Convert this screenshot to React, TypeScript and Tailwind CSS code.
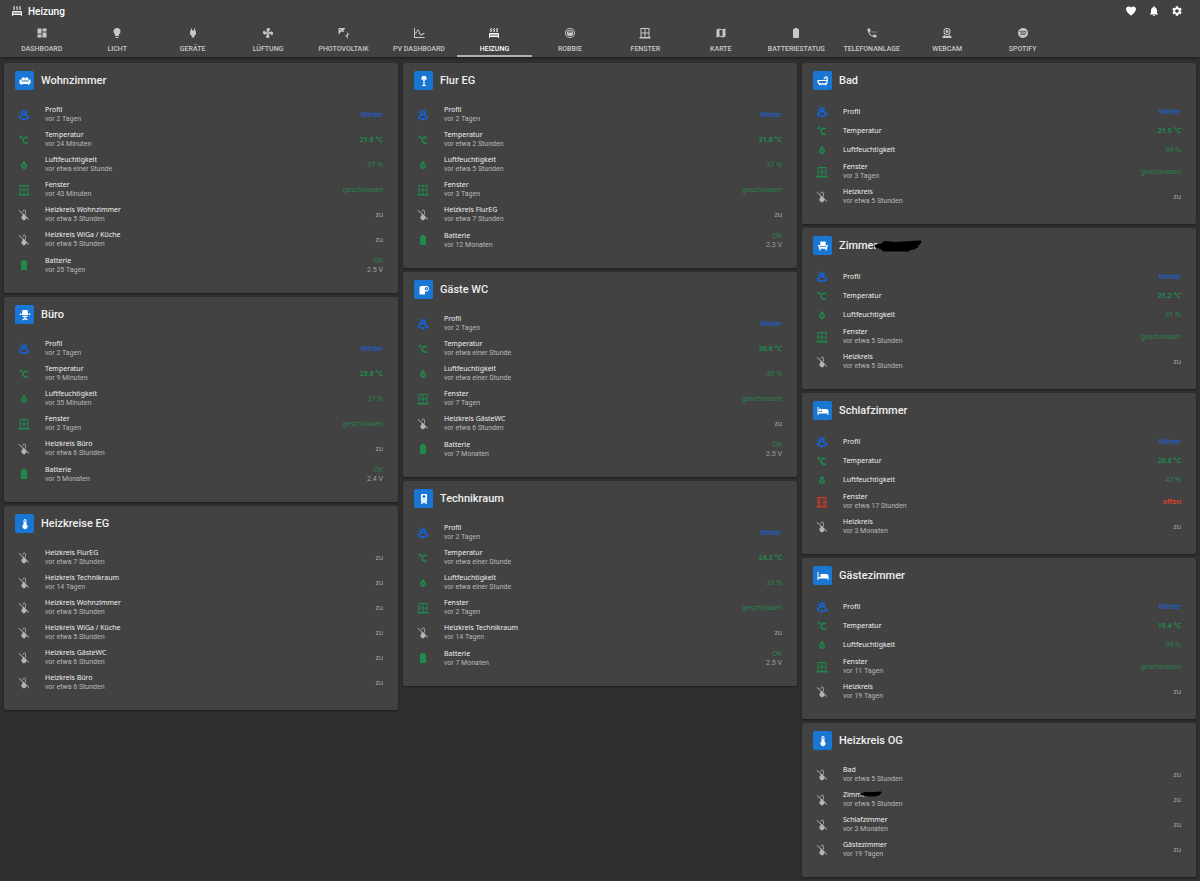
import React from "react";
import { MdDashboard, MdMap, MdFavorite, MdNotifications, MdSettings } from "react-icons/md";

type IconProps = { className?: string };

const glyph = (d: string) =>
  function Glyph({ className }: IconProps) {
    return (
      <svg viewBox="0 0 24 24" fill="currentColor" fillRule="evenodd" className={className} aria-hidden="true">
        <path d={d} />
      </svg>
    );
  };

const Radiator = glyph(
  "M7.95,3L6.53,5.19L7.95,7.4L5.95,10.5L4.22,9.6L5.64,7.39L4.22,5.19L6.22,2.09L7.95,3M13.95,2.89L12.53,5.1L13.95,7.3L11.95,10.4L10.22,9.5L11.64,7.3L10.22,5.1L12.22,2L13.95,2.89M20,2.89L18.56,5.1L20,7.3L18,10.4L16.25,9.5L17.67,7.3L16.25,5.1L18.25,2L20,2.89M2,22V14A2,2 0 0,1 4,12H20A2,2 0 0,1 22,14V22H20V20H4V22H2M6,14A1,1 0 0,0 5,15V17A1,1 0 0,0 7,17V15A1,1 0 0,0 6,14M10,14A1,1 0 0,0 9,15V17A1,1 0 0,0 11,17V15A1,1 0 0,0 10,14M14,14A1,1 0 0,0 13,15V17A1,1 0 0,0 15,17V15A1,1 0 0,0 14,14M18,14A1,1 0 0,0 17,15V17A1,1 0 0,0 19,17V15A1,1 0 0,0 18,14Z",
);
const Bulb = glyph(
  "M12,2A7,7 0 0,0 5,9C5,11.38 6.19,13.47 8,14.74V17A1,1 0 0,0 9,18H15A1,1 0 0,0 16,17V14.74C17.81,13.47 19,11.38 19,9A7,7 0 0,0 12,2M9,21A1,1 0 0,0 10,22H14A1,1 0 0,0 15,21V20H9V21Z",
);
const Plug = glyph("M16,7V3H14V7H10V3H8V7C7,7 6,8 6,9V14.5L9.5,18V21H14.5V18L18,14.5V9C18,8 17,7 16,7Z");
const Fan = glyph(
  "M12,11A1,1 0 0,0 11,12A1,1 0 0,0 13,12A1,1 0 0,0 12,11M12.5,2C17,2 17.11,5.57 14.75,6.75C13.76,7.24 13.32,8.29 13.13,9.22C13.61,9.42 14.03,9.73 14.35,10.13C18.05,8.13 22.03,8.92 22.03,12.5C22.03,17 18.46,17.1 17.28,14.73C16.78,13.74 15.72,13.3 14.79,13.11C14.59,13.59 14.28,14 13.88,14.34C15.87,18.03 15.08,22 11.5,22C7,22 6.91,18.42 9.27,17.24C10.25,16.75 10.69,15.71 10.89,14.79C10.4,14.59 9.97,14.27 9.65,13.87C5.96,15.85 2,15.07 2,11.5C2,7 5.56,6.89 6.74,9.26C7.24,10.25 8.29,10.68 9.22,10.87C9.41,10.39 9.73,9.97 10.14,9.65C8.15,5.96 8.94,2 12.5,2Z",
);
const SolarPower = glyph("M1,2H14V4L10,6.5L12.5,8.5L10.5,10.5L7,8.5L2,14.5H1V2M3,4V6H5V4H3M18,10L22.5,16H19.5V23L14,16.5H18V10Z");
const ChartCurve = glyph(
  "M2,2H4V20H23V22H2V2M4,11L6,11C8,4 11,3 13,9C14.5,14 16,16 18.5,13.5L20,12H23V14H21L19.5,15.5C16,18.5 13,16 11.3,10C10,5.5 8.8,6.5 7.5,11.5L7,13H4V11Z",
);
const Vacuum = glyph(
  "M12,2A10,10 0 1,0 12,22A10,10 0 1,0 12,2M12,4A8,8 0 1,1 12,20A8,8 0 1,1 12,4M12,6C9,6 6.7,7.5 6,10V15C7.5,17.5 9.5,18 12,18C14.5,18 16.5,17.5 18,15V10C17.3,7.5 15,6 12,6M8,10C9,8.3 15,8.3 16,10V11H8V10Z",
);
const WindowClosed = glyph(
  "M21 20V2H3V20H1V23H23V20H21M19 11H13V4H19V11M5 4H11V11H5V4M5 20V13H11V20H5M13 20V13H19V20H13Z",
);
const WindowOpen = glyph(
  "M21 20V2H3V20H1V23H23V20H21M19 4V11H17V4H19M5 4H7V11H5V4M5 20V13H7V20H5M9 20V4H15V20H9M17 20V13H19V20H17Z",
);
const Battery = glyph(
  "M16.67,4H15V2H9V4H7.33A1.33,1.33 0 0,0 6,5.33V20.67C6,21.4 6.6,22 7.33,22H16.67A1.33,1.33 0 0,0 18,20.67V5.33C18,4.6 17.4,4 16.67,4Z",
);
const Phone = glyph(
  "M20,15.5C18.8,15.5 17.5,15.3 16.4,14.9C16,14.8 15.6,14.9 15.4,15.2L13.2,17.4C10.4,15.9 8,13.6 6.6,10.8L8.8,8.6C9.1,8.3 9.2,7.9 9,7.6C8.7,6.5 8.5,5.2 8.5,4C8.5,3.5 8,3 7.5,3H4C3.5,3 3,3.5 3,4C3,13.4 10.6,21 20,21C20.5,21 21,20.5 21,20V16.5C21,16 20.5,15.5 20,15.5M11,9H13V11H11V9M15,9H17V11H15V9M19,9H21V11H19V9Z",
);
const Webcam = glyph(
  "M12,2A7,7 0 1,0 12,16A7,7 0 1,0 12,2M12,4A5,5 0 1,1 12,14A5,5 0 1,1 12,4M12,6A3,3 0 1,0 12,12A3,3 0 1,0 12,6M6,16C7.6,17.3 9.8,18 12,18C14.2,18 16.4,17.3 18,16L21,20V22H3V20L6,16Z",
);
const Spotify = glyph(
  "M17.9,10.9C14.7,9 9.35,8.8 6.3,9.75C5.8,9.9 5.3,9.6 5.15,9.15C5,8.65 5.3,8.15 5.75,8C9.3,6.95 15.15,7.15 18.85,9.35C19.3,9.6 19.45,10.2 19.2,10.65C18.95,11 18.35,11.15 17.9,10.9M17.8,13.7C17.55,14.05 17.1,14.2 16.75,13.95C14.05,12.3 9.95,11.8 6.8,12.8C6.4,12.9 5.95,12.7 5.85,12.3C5.75,11.9 5.95,11.45 6.35,11.35C10,10.25 14.5,10.8 17.6,12.7C17.9,12.85 18.05,13.35 17.8,13.7M16.6,16.45C16.4,16.75 16.05,16.85 15.75,16.65C13.4,15.2 10.45,14.9 6.95,15.7C6.6,15.8 6.3,15.55 6.2,15.25C6.1,14.9 6.35,14.6 6.65,14.5C10.45,13.65 13.75,14 16.35,15.6C16.7,15.75 16.75,16.15 16.6,16.45M12,2A10,10 0 1,0 12,22A10,10 0 1,0 12,2Z",
);

function Profile({ className }: IconProps) {
  return (
    <svg viewBox="0 0 24 24" fill="none" stroke="currentColor" strokeWidth="2.6" className={className} aria-hidden="true">
      <path d="M8.5,19H5.5A2.6,2.6 0 0,1 4.6,14L8,12.5V9A4,4 0 0,1 16,9V12.5L20,14.5A2.4,2.4 0 0,1 19.5,19H15.5M8,12.5L12,10.5L16,12.5" />
      <path strokeWidth="2" d="M10.5,0.5V3M4.5,1.5L6.5,4M2,7.5L5,8.5M17.5,1.5L16,4" />
      <circle cx="12" cy="20.3" r="2.5" fill="currentColor" stroke="none" />
    </svg>
  );
}

const Celsius = glyph(
  "M16.5,5C18.05,5 19.5,5.47 20.69,6.28L19.53,9.17C18.73,8.44 17.67,8 16.5,8C14,8 12,10 12,12.5C12,15 14,17 16.5,17C17.53,17 18.47,16.66 19.23,16.08L20.37,18.93C19.24,19.61 17.92,20 16.5,20A7.5,7.5 0 0,1 9,12.5A7.5,7.5 0 0,1 16.5,5M6,3A3,3 0 0,1 9,6A3,3 0 0,1 3,6A3,3 0 0,1 6,3M6,5A1,1 0 0,0 5,6A1,1 0 0,0 7,6A1,1 0 0,0 6,5Z",
);
const Humidity = glyph(
  "M12,3.25C12,3.25 6,10 6,14C6,17.32 8.69,20 12,20A6,6 0 0,0 18,14C18,10 12,3.25 12,3.25M14.47,9.97L15.53,11.03L9.53,17.03L8.47,15.97L14.47,9.97M9.75,10A1.25,1.25 0 0,1 11,11.25A1.25,1.25 0 0,1 8.5,11.25A1.25,1.25 0 0,1 9.75,10M14.25,14.5A1.25,1.25 0 0,1 15.5,15.75A1.25,1.25 0 0,1 13,15.75A1.25,1.25 0 0,1 14.25,14.5Z",
);

function CircuitOff({ className }: IconProps) {
  return (
    <svg viewBox="0 0 24 24" fill="none" stroke="currentColor" strokeWidth="1.6" className={className} aria-hidden="true">
      <path d="M10,6V4.5A2.5,2.5 0 0,1 15,4.5V11M10,9V14" />
      <path strokeWidth="2" d="M1.5,2.5L22,21" />
      <path fill="currentColor" stroke="none" d="M11,11H14.5V13.2A5,5 0 1,1 9.5,13.2Z" />
    </svg>
  );
}

const Sofa = glyph(
  "M7,5H10.5C11.3,5 11.7,5.4 11.7,6V11H5.5V7C5.5,5.8 6,5 7,5M13.5,5H17C18,5 18.5,5.8 18.5,7V11H12.3V6C12.3,5.4 12.7,5 13.5,5M3,9C4.2,9 5,9.8 5,11V13H19V11C19,9.8 19.8,9 21,9C22.2,9 23,9.8 23,11V16C23,17.2 22.2,18 21,18H20V20H18V18H6V20H4V18H3C1.8,18 1,17.2 1,16V11C1,9.8 1.8,9 3,9Z",
);
const OfficeChair = glyph(
  "M8,2H16C17,2 17.4,2.5 17.5,3.5L18,12H6L6.5,3.5C6.6,2.5 7,2 8,2M1.5,9H5V12H1.5V9M19,9H22.5V12H19V9M7,13.5H17V16H13.2V18L17,20.5V22.5H15L12,20.5L9,22.5H7V20.5L10.8,18V16H7V13.5Z",
);
const Thermometer = glyph(
  "M15,13V5A3,3 0 0,0 9,5V13A5,5 0 1,0 15,13M12,4A1,1 0 0,1 13,5V8H11V5A1,1 0 0,1 12,4Z",
);
const FloorLamp = glyph("M8.5,2H15.5L18,9H13.3V20H15.5V22H8.5V20H10.7V9H6L8.5,2Z");
const ToiletPaper = glyph(
  "M6,4H17C20,4 22,6.5 22,9.5C22,12.5 20,15 17,15H14V21H3V9C3,6 4.2,4 6,4M17,6C14.8,6 13.5,7.5 13.5,9.5C13.5,11.5 14.8,13 17,13C19,13 20.3,11.5 20.3,9.5C20.3,7.5 19,6 17,6M16,8.5H18V10.5H16V8.5Z",
);
const Boiler = glyph(
  "M8,2H16C17.2,2 18,2.8 18,4V17H16.5L18,22H15.5L14,18.5H13V21H11V18.5H10L8.5,22H6L7.5,17H6V4C6,2.8 6.8,2 8,2M12,4A3,3 0 1,0 12,10A3,3 0 1,0 12,4M9,13V15H11V13H9M13,13V15H15V13H13Z",
);
const Bathtub = glyph(
  "M1,10H19V6C19,4.9 18.1,4.5 17.3,4.9C17,5.1 16.8,5.5 16.8,6L17.5,7.5L13,8.5C13,6.5 14,5.5 15,5.2C15.7,3.3 17,2.5 18.3,2.5C20.2,2.5 21.5,4 21.5,6V13C21.5,16 20.5,18 18.5,18.8V21H16.5V19.3H6.5V21H4.5V18.8C2.3,18 1,16 1,13V10M3.5,12.2C3.5,15.2 4.6,16.7 7,16.7H15.5C17.9,16.7 19,15.2 19,12.2H3.5Z",
);
const Armchair = glyph("M8,3H16C17,3 17.5,3.6 17.5,4.5V12H6.5V4.5C6.5,3.6 7,3 8,3M2,10H5.5V13.5H18.5V10H22V13H20.5V17H19.5V21H17V17.5H7V21H4.5V17H3.5V13H2V10Z");
const Bunk = glyph(
  "M3,4V14H10V8H19A4,4 0 0,1 23,12V20H21V17H3V20H1V4H3M6.5,7A3,3 0 1,0 6.5,13A3,3 0 1,0 6.5,7Z",
);
const Bed = glyph("M3,4V14H7V8H19A4,4 0 0,1 23,12V20H21V17H3V20H1V4H3Z");

type Icon = React.ComponentType<IconProps>;

const TABS: { label: string; icon: Icon }[] = [
  { label: "Dashboard", icon: MdDashboard },
  { label: "Licht", icon: Bulb },
  { label: "Geräte", icon: Plug },
  { label: "Lüftung", icon: Fan },
  { label: "Photovoltaik", icon: SolarPower },
  { label: "PV Dashboard", icon: ChartCurve },
  { label: "Heizung", icon: Radiator },
  { label: "Robbie", icon: Vacuum },
  { label: "Fenster", icon: WindowClosed },
  { label: "Karte", icon: MdMap },
  { label: "Batteriestatus", icon: Battery },
  { label: "Telefonanlage", icon: Phone },
  { label: "Webcam", icon: Webcam },
  { label: "Spotify", icon: Spotify },
];

type Row = {
  icon: Icon;
  iconTone: string;
  label: string;
  redacted?: boolean;
  since?: string;
  value: string;
  valueTone: string;
  detail?: string;
};
type CardData = { title: string; icon: Icon; redacted?: boolean; rows: Row[] };

const GREEN = "text-[#1e8a4c]";
const GREEN_VALUE = "text-[#26864e]";

const profile = (since?: string): Row => ({
  icon: Profile, iconTone: "text-[#0f68f0]", label: "Profil", since, value: "Winter", valueTone: "text-[#1268ea]",
});
const temperature = (value: string, since?: string): Row => ({
  icon: Celsius, iconTone: GREEN, label: "Temperatur", since, value: `${value} °C`, valueTone: "font-bold text-[#1e8a4c]",
});
const humidity = (value: string, since?: string): Row => ({
  icon: Humidity, iconTone: GREEN, label: "Luftfeuchtigkeit", since, value: `${value} %`, valueTone: GREEN_VALUE,
});
const windowClosed = (since: string): Row => ({
  icon: WindowClosed, iconTone: GREEN, label: "Fenster", since, value: "geschlossen", valueTone: GREEN_VALUE,
});
const windowOpen = (since: string): Row => ({
  icon: WindowOpen, iconTone: "text-[#cc3b2d]", label: "Fenster", since, value: "offen", valueTone: "font-bold text-[#d8402f]",
});
const circuit = (label: string, since: string, redacted = false): Row => ({
  icon: CircuitOff, iconTone: "text-[#b4b4b4]", label, since, redacted, value: "zu", valueTone: "text-[#a8a8a8]",
});
const battery = (since: string, volts: string): Row => ({
  icon: Battery, iconTone: GREEN, label: "Batterie", since, value: "OK", valueTone: GREEN_VALUE, detail: `${volts} V`,
});

const COLUMNS: CardData[][] = [
  [
    {
      title: "Wohnzimmer",
      icon: Sofa,
      rows: [
        profile("vor 2 Tagen"),
        temperature("21.6", "vor 24 Minuten"),
        humidity("37", "vor etwa einer Stunde"),
        windowClosed("vor 43 Minuten"),
        circuit("Heizkreis Wohnzimmer", "vor etwa 5 Stunden"),
        circuit("Heizkreis WiGa / Küche", "vor etwa 5 Stunden"),
        battery("vor 25 Tagen", "2.5"),
      ],
    },
    {
      title: "Büro",
      icon: OfficeChair,
      rows: [
        profile("vor 2 Tagen"),
        temperature("23.6", "vor 9 Minuten"),
        humidity("37", "vor 35 Minuten"),
        windowClosed("vor 2 Tagen"),
        circuit("Heizkreis Büro", "vor etwa 6 Stunden"),
        battery("vor 5 Monaten", "2.4"),
      ],
    },
    {
      title: "Heizkreise EG",
      icon: Thermometer,
      rows: [
        circuit("Heizkreis FlurEG", "vor etwa 7 Stunden"),
        circuit("Heizkreis Technikraum", "vor 14 Tagen"),
        circuit("Heizkreis Wohnzimmer", "vor etwa 5 Stunden"),
        circuit("Heizkreis WiGa / Küche", "vor etwa 5 Stunden"),
        circuit("Heizkreis GästeWC", "vor etwa 6 Stunden"),
        circuit("Heizkreis Büro", "vor etwa 6 Stunden"),
      ],
    },
  ],
  [
    {
      title: "Flur EG",
      icon: FloorLamp,
      rows: [
        profile("vor 2 Tagen"),
        temperature("21.8", "vor etwa 2 Stunden"),
        humidity("37", "vor etwa 5 Stunden"),
        windowClosed("vor 3 Tagen"),
        circuit("Heizkreis FlurEG", "vor etwa 7 Stunden"),
        battery("vor 12 Monaten", "2.3"),
      ],
    },
    {
      title: "Gäste WC",
      icon: ToiletPaper,
      rows: [
        profile("vor 2 Tagen"),
        temperature("20.6", "vor etwa einer Stunde"),
        humidity("40", "vor etwa einer Stunde"),
        windowClosed("vor 7 Tagen"),
        circuit("Heizkreis GästeWC", "vor etwa 6 Stunden"),
        battery("vor 7 Monaten", "2.5"),
      ],
    },
    {
      title: "Technikraum",
      icon: Boiler,
      rows: [
        profile("vor 2 Tagen"),
        temperature("24.3", "vor etwa einer Stunde"),
        humidity("35", "vor etwa einer Stunde"),
        windowClosed("vor 2 Tagen"),
        circuit("Heizkreis Technikraum", "vor 14 Tagen"),
        battery("vor 7 Monaten", "2.5"),
      ],
    },
  ],
  [
    {
      title: "Bad",
      icon: Bathtub,
      rows: [profile(), temperature("21.5"), humidity("44"), windowClosed("vor 3 Tagen"), circuit("Heizkreis", "vor etwa 5 Stunden")],
    },
    {
      title: "Zimmer",
      icon: Armchair,
      redacted: true,
      rows: [profile(), temperature("21.2"), humidity("41"), windowClosed("vor etwa 5 Stunden"), circuit("Heizkreis", "vor etwa 5 Stunden")],
    },
    {
      title: "Schlafzimmer",
      icon: Bunk,
      rows: [profile(), temperature("20.8"), humidity("42"), windowOpen("vor etwa 17 Stunden"), circuit("Heizkreis", "vor 3 Monaten")],
    },
    {
      title: "Gästezimmer",
      icon: Bed,
      rows: [profile(), temperature("19.4"), humidity("39"), windowClosed("vor 11 Tagen"), circuit("Heizkreis", "vor 19 Tagen")],
    },
    {
      title: "Heizkreis OG",
      icon: Thermometer,
      rows: [
        circuit("Bad", "vor etwa 5 Stunden"),
        circuit("Zimmer", "vor etwa 5 Stunden", true),
        circuit("Schlafzimmer", "vor 3 Monaten"),
        circuit("Gästezimmer", "vor 19 Tagen"),
      ],
    },
  ],
];

function Scribble({ className }: IconProps) {
  return (
    <svg viewBox="0 0 48 12" className={className} fill="#000" stroke="#000" strokeLinecap="round" strokeLinejoin="round" aria-hidden="true">
      <path strokeWidth="3" d="M2,6L8,5L11,2.5L20,3.5L28,3L46,2L44,4L36,5L43,6L40,8L36,8.5L34,10H10L7,7.5Z" />
    </svg>
  );
}

function EntityRow({ row }: { row: Row }) {
  const RowIcon = row.icon;
  const height = row.detail ? "h-[26px]" : row.since ? "h-[25px]" : "h-[19px]";
  return (
    <li className={`flex items-center ${height}`}>
      <RowIcon className={`ml-[14px] size-3 shrink-0 ${row.iconTone}`} />
      <div className="relative ml-[15px] min-w-0 flex-1">
        <p className="text-[7px] leading-[9px] text-[#f0f0f0]">{row.label}</p>
        {row.redacted && <Scribble className="absolute top-0 left-[17px] h-2 w-[22px]" />}
        {row.since && <p className="mt-px font-['Roboto',sans-serif] text-[7px] leading-[9px] text-[#b8b8b8]">{row.since}</p>}
      </div>
      <div className={`mr-[15px] text-right text-[7px] leading-[9px] ${row.valueTone}`}>
        <p>{row.value}</p>
        {row.detail && <p className="mt-px font-['Roboto',sans-serif] text-[#a0a0a0]">{row.detail}</p>}
      </div>
    </li>
  );
}

function Card({ card }: { card: CardData }) {
  const CardIcon = card.icon;
  return (
    <section className="rounded-xs bg-[#424242] pb-[15px] shadow-xs shadow-black/40">
      <header className="flex items-center gap-[7px] px-[11px] pt-2">
        <span className="flex size-[19px] items-center justify-center rounded-xs bg-[#1976d2]">
          <CardIcon className="size-3 text-white" />
        </span>
        <div className="relative">
          <h2 className="font-['Roboto',sans-serif] text-[11px] leading-[19px] font-medium text-[#eeeeee]">{card.title}</h2>
          {card.redacted && <Scribble className="absolute top-1 left-[35px] h-3 w-12" />}
        </div>
      </header>
      <ul className="mt-3">
        {card.rows.map((row, i) => (
          <EntityRow key={i} row={row} />
        ))}
      </ul>
    </section>
  );
}

export default function App() {
  return (
    <div className="min-h-screen bg-[#2f2f2f] font-['Noto_Sans',sans-serif]">
      <header className="bg-[#424242] font-['Roboto',sans-serif] shadow-xs shadow-black/40">
        <div className="flex h-[22px] items-center px-[11px]">
          <Radiator className="size-3 text-[#eeeeee]" />
          <h1 className="ml-[5px] flex-1 text-[10px] font-medium text-white">Heizung</h1>
          <div className="flex gap-[11px] pr-[6px] text-white">
            <button type="button" aria-label="Favoriten"><MdFavorite className="size-3" /></button>
            <button type="button" aria-label="Benachrichtigungen"><MdNotifications className="size-3" /></button>
            <button type="button" aria-label="Einstellungen"><MdSettings className="size-3" /></button>
          </div>
        </div>
        <nav className="grid grid-cols-[repeat(14,6.33%)] px-1">
          {TABS.map(({ label, icon: TabIcon }) => {
            const active = label === "Heizung";
            return (
              <a
                key={label}
                href="#"
                aria-current={active ? "page" : undefined}
                className={`flex h-[35px] flex-col items-center border-b-2 pt-[5px] text-[7px] font-medium whitespace-nowrap uppercase ${
                  active ? "border-[#b0b0b0] text-white" : "border-transparent text-[#c8c8c8]"
                }`}
              >
                <TabIcon className="size-3" />
                <span className="mt-[6px] leading-[9px]">{label}</span>
              </a>
            );
          })}
        </nav>
      </header>
      <main className="grid grid-cols-3 items-start gap-[5px] px-1 pt-[6px] pb-1">
        {COLUMNS.map((cards, i) => (
          <div key={i} className="flex flex-col gap-1">
            {cards.map((card) => (
              <Card key={card.title} card={card} />
            ))}
          </div>
        ))}
      </main>
    </div>
  );
}
